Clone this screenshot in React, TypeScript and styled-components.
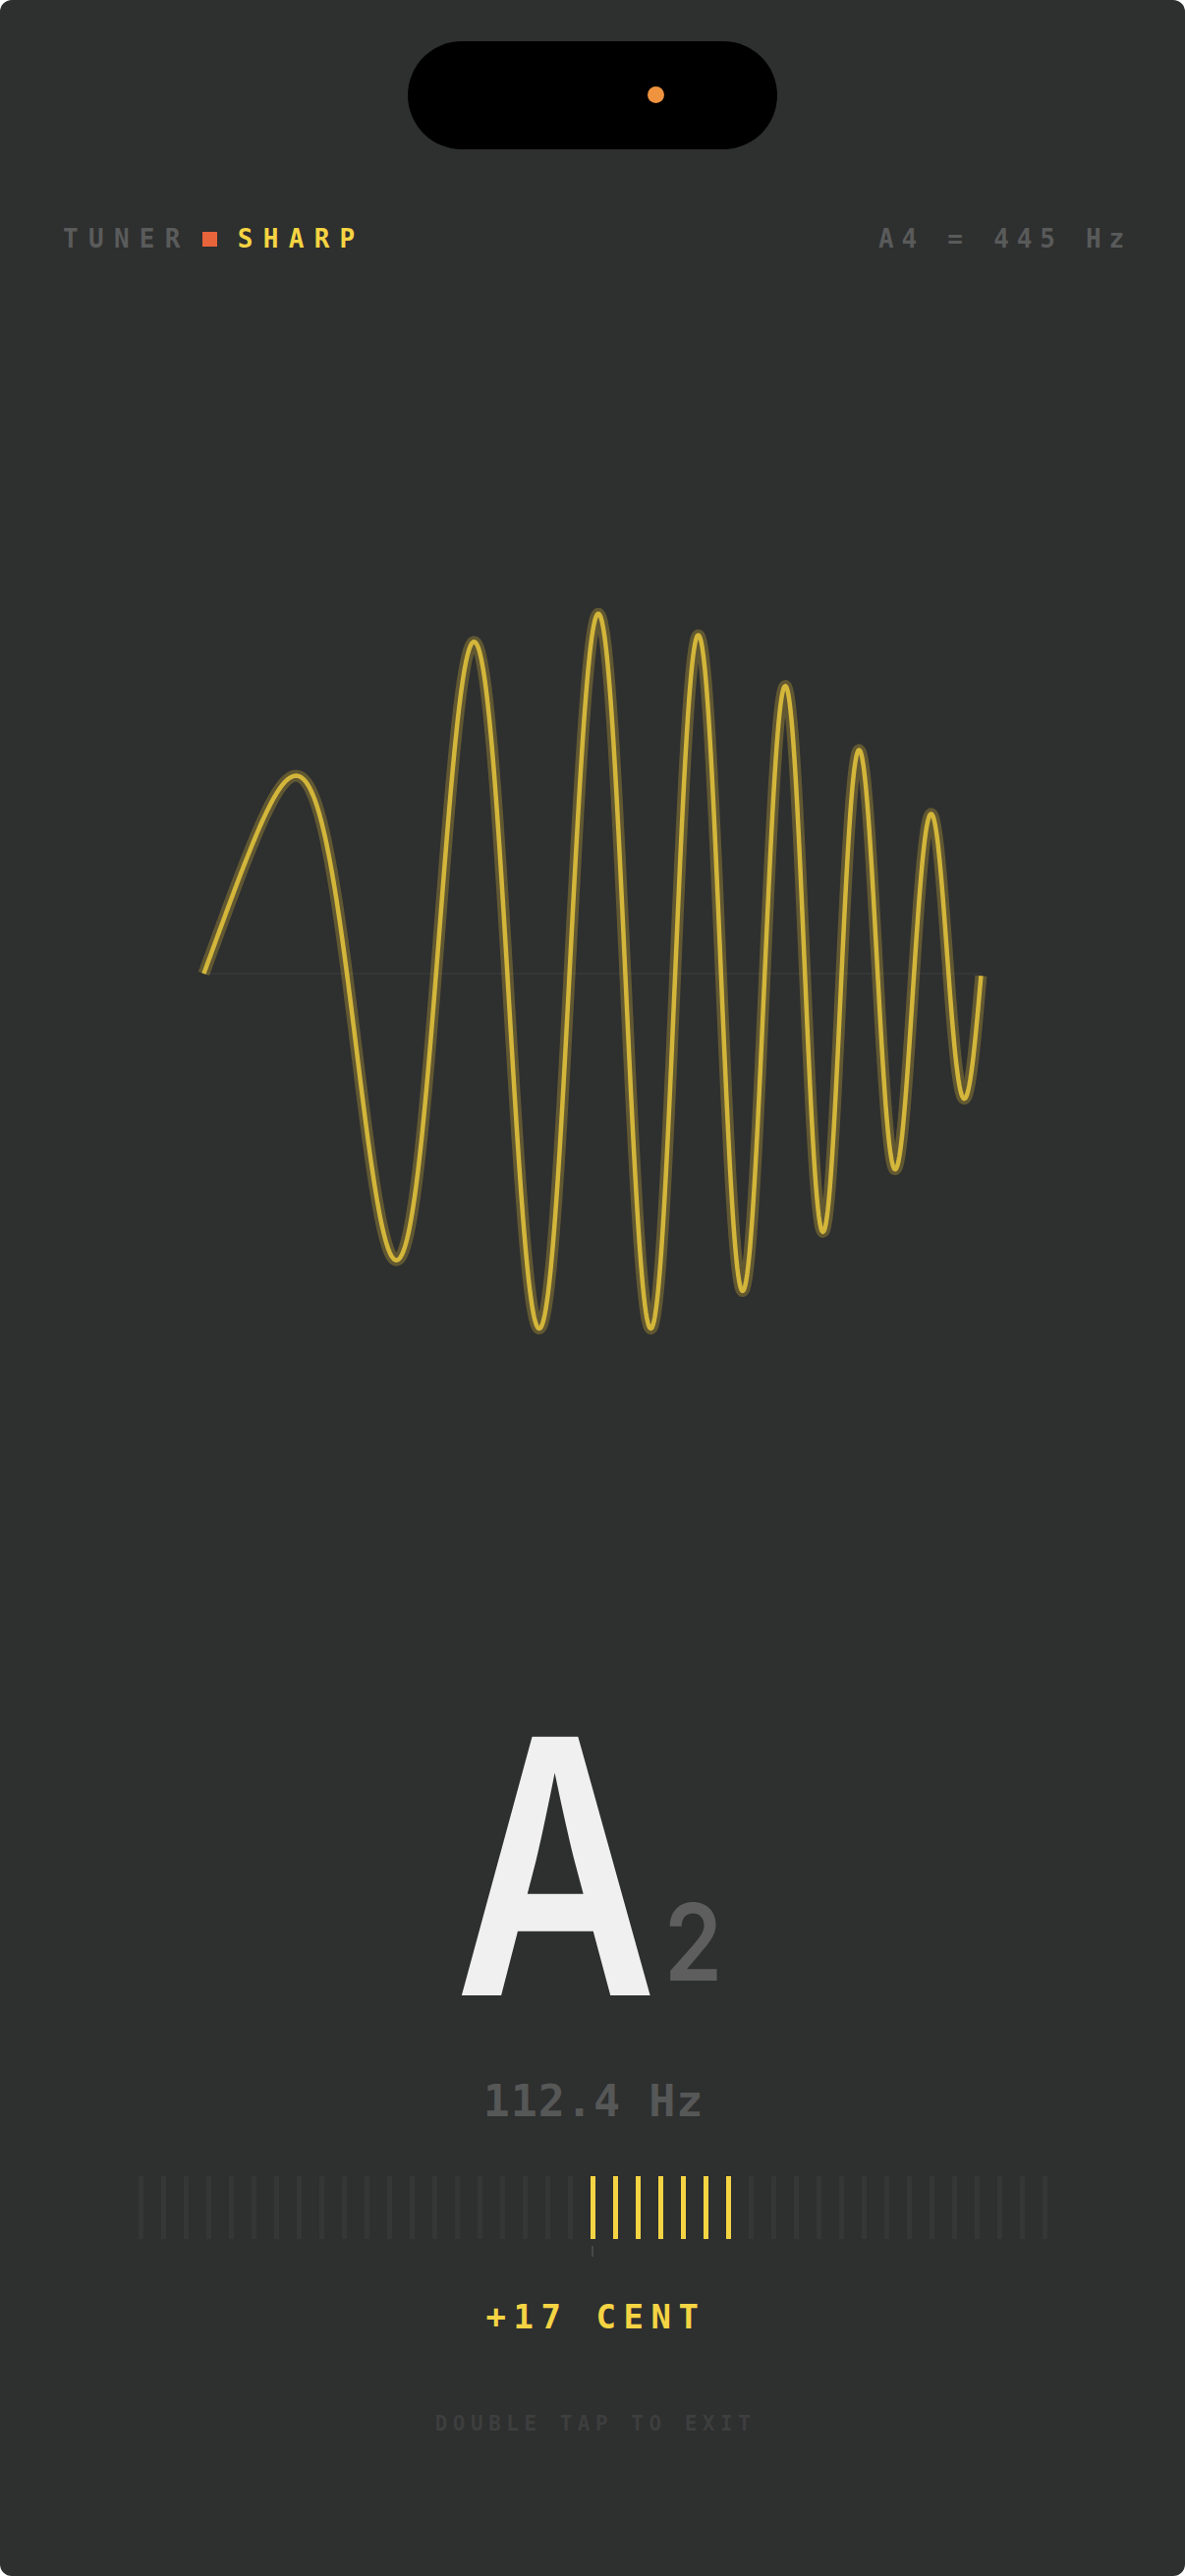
import styled, { createGlobalStyle } from "styled-components";

const MONO = `"DejaVu Sans Mono", "Liberation Mono", monospace`;
const SANS = `Inter, "Noto Sans", sans-serif`;

const YELLOW = "#f5d443";
const BG = "#2e2f2f";

// extrema of the trace: x, phase (in quarter turns), amplitude
const WAVE_KEYS: [number, number, number][] = [
  [207.4, 0, 150],
  [294.5, 1, 199],
  [401.4, 3, 291],
  [481.7, 5, 337.6],
  [548.6, 7, 361.3],
  [608.9, 9, 366.3],
  [662.4, 11, 361.3],
  [710.9, 13, 344.5],
  [756.1, 15, 323],
  [799.6, 17, 292.7],
  [838.0, 19, 262.7],
  [874.8, 21, 227.4],
  [911.6, 23, 199.1],
  [948.4, 25, 162.2],
  [981.9, 27, 127.2],
  [998.6, 28, 120],
];
const WAVE_MID = 991;

// monotone cubic (Fritsch–Carlson) so the trace has no kinks at the keys
function monotone(xs: number[], ys: number[]) {
  const n = xs.length;
  const d: number[] = [];
  for (let i = 0; i < n - 1; i++) d.push((ys[i + 1] - ys[i]) / (xs[i + 1] - xs[i]));
  const m: number[] = [d[0]];
  for (let i = 1; i < n - 1; i++) {
    if (d[i - 1] * d[i] <= 0) m.push(0);
    else {
      const w1 = 2 * (xs[i + 1] - xs[i]) + (xs[i] - xs[i - 1]);
      const w2 = (xs[i + 1] - xs[i]) + 2 * (xs[i] - xs[i - 1]);
      m.push((w1 + w2) / (w1 / d[i - 1] + w2 / d[i]));
    }
  }
  m.push(d[n - 2]);
  return (x: number) => {
    let i = 0;
    while (i < n - 2 && x > xs[i + 1]) i++;
    const h = xs[i + 1] - xs[i];
    const t = (x - xs[i]) / h;
    const t2 = t * t;
    const t3 = t2 * t;
    return (
      (2 * t3 - 3 * t2 + 1) * ys[i] +
      (t3 - 2 * t2 + t) * h * m[i] +
      (-2 * t3 + 3 * t2) * ys[i + 1] +
      (t3 - t2) * h * m[i + 1]
    );
  };
}

function buildWave() {
  const xs = WAVE_KEYS.map((k) => k[0]);
  const phase = monotone(xs, WAVE_KEYS.map((k) => k[1]));
  const amp = monotone(xs, WAVE_KEYS.map((k) => k[2]));
  const first = xs[0];
  const last = xs[xs.length - 1];
  const pts: string[] = [];
  for (let x = first; x <= last + 0.01; x += 1) {
    const xx = Math.min(x, last);
    const y = WAVE_MID - amp(xx) * Math.sin(phase(xx) * (Math.PI / 2));
    pts.push(`${xx.toFixed(1)},${y.toFixed(1)}`);
  }
  return "M" + pts.join(" L");
}

const BAR_COUNT = 41;
const CENTER_BAR = 20;
const LIT_BARS = 7;

export default function App() {
  const wave = buildWave();

  return (
    <>
      <GlobalStyle />
      <Screen>
        <Island>
          <IslandDot />
        </Island>

        <Header>
          <HeaderLeft>
            <TunerLabel>TUNER</TunerLabel>
            <StateSquare />
            <StateLabel>SHARP</StateLabel>
          </HeaderLeft>
          <RefPitch>A4 = 445 Hz</RefPitch>
        </Header>

        <Scope viewBox="0 560 1206 860" width={1206} height={860}>
          <line x1={207} y1={WAVE_MID} x2={999} y2={WAVE_MID} stroke="#353636" strokeWidth={2} />
          <path d={wave} fill="none" stroke="rgba(214,186,60,0.3)" strokeWidth={12} strokeLinejoin="round" />
          <path d={wave} fill="none" stroke="#d3b63a" strokeWidth={4.5} strokeLinejoin="round" />
        </Scope>

        <NoteRow>
          <LetterBox>
            <NoteLetter>A</NoteLetter>
          </LetterBox>
          <OctaveBox>
            <Octave>2</Octave>
          </OctaveBox>
        </NoteRow>

        <Frequency>112.4 Hz</Frequency>

        <Meter>
          <BarRow>
            {Array.from({ length: BAR_COUNT }, (_, i) => (
              <Bar key={i} lit={i >= CENTER_BAR && i < CENTER_BAR + LIT_BARS} />
            ))}
          </BarRow>
          <CenterTick />
        </Meter>

        <Cents>+17 CENT</Cents>

        <ExitHint>DOUBLE TAP TO EXIT</ExitHint>
      </Screen>
    </>
  );
}

const GlobalStyle = createGlobalStyle`
  html, body {
    margin: 0;
    padding: 0;
    background: #ffffff;
  }
  * {
    box-sizing: border-box;
  }
`;

const Screen = styled.div`
  width: 1206px;
  height: 2622px;
  border-radius: 12px;
  overflow: hidden;

  display: flex;
  flex-direction: column;
  align-items: center;

  background-color: ${BG};
`;

const Island = styled.div`
  position: relative;
  width: 376px;
  height: 110px;
  margin-top: 42px;
  flex-shrink: 0;

  border-radius: 55px;
  background-color: #000000;
`;

const IslandDot = styled.span`
  position: absolute;
  left: 244px;
  top: 46px;
  width: 17px;
  height: 17px;
  border-radius: 50%;
  background-color: #f0933f;
`;

const Header = styled.div`
  width: 100%;
  height: 26px;
  margin-top: 78px;
  padding: 0 54px 0 64px;

  display: flex;
  align-items: center;
  justify-content: space-between;

  font-family: ${MONO};
  font-size: 26px;
  font-weight: 700;
  line-height: 1;
`;

const HeaderLeft = styled.div`
  display: flex;
  align-items: center;
`;

const TunerLabel = styled.span`
  color: #5a5b5b;
  letter-spacing: 10.3px;
`;

const StateSquare = styled.span`
  width: 15px;
  height: 15px;
  margin: 1px 21px 0 12px;
  background-color: #e8643a;
`;

const StateLabel = styled.span`
  color: ${YELLOW};
  letter-spacing: 10.3px;
`;

const RefPitch = styled.span`
  color: #595a5a;
  letter-spacing: 7.8px;
`;

const Scope = styled.svg`
  display: block;
  margin-top: 304px;
  flex-shrink: 0;
`;

const NoteRow = styled.div`
  margin-top: 298px;
  margin-left: -5px;
  display: flex;
  align-items: flex-end;
  gap: 10px;
`;

const LetterBox = styled.div`
  width: 200px;
  display: flex;
  justify-content: center;
`;

const NoteLetter = styled.span`
  display: inline-block;
  white-space: nowrap;
  transform: scaleX(0.78);

  font-family: ${SANS};
  font-size: 362px;
  font-weight: 600;
  line-height: 1;
  color: #f0f0f0;
`;

const OctaveBox = styled.div`
  width: 60px;
  margin-bottom: 49px;
  display: flex;
  justify-content: center;
`;

const Octave = styled.span`
  display: inline-block;
  white-space: nowrap;
  transform: scaleX(0.88);

  font-family: ${SANS};
  font-size: 108px;
  font-weight: 600;
  line-height: 1;
  color: #5e5e5e;
`;

const Frequency = styled.div`
  margin-top: 36px;
  padding-left: 2px;

  font-family: ${MONO};
  font-size: 45px;
  font-weight: 700;
  line-height: 1;
  letter-spacing: 1px;
  color: #565757;
`;

const Meter = styled.div`
  margin-top: 54px;
  display: flex;
  flex-direction: column;
  align-items: center;
`;

const BarRow = styled.div`
  display: flex;
  gap: 18px;
`;

const Bar = styled.span<{ lit: boolean }>`
  width: 5px;
  height: 64px;
  background-color: ${(props) => (props.lit ? YELLOW : "#353636")};
`;

const CenterTick = styled.span`
  width: 2px;
  height: 11px;
  margin-top: 7px;
  background-color: #474847;
`;

const Cents = styled.div`
  margin-top: 44px;
  padding-left: 7px;

  font-family: ${MONO};
  font-size: 34px;
  font-weight: 700;
  line-height: 1;
  letter-spacing: 7.5px;
  color: ${YELLOW};
`;

const ExitHint = styled.div`
  margin-top: 82px;
  padding-left: 6px;

  font-family: ${MONO};
  font-size: 21px;
  font-weight: 700;
  line-height: 1;
  letter-spacing: 5.5px;
  color: #3d3e3e;
`;
